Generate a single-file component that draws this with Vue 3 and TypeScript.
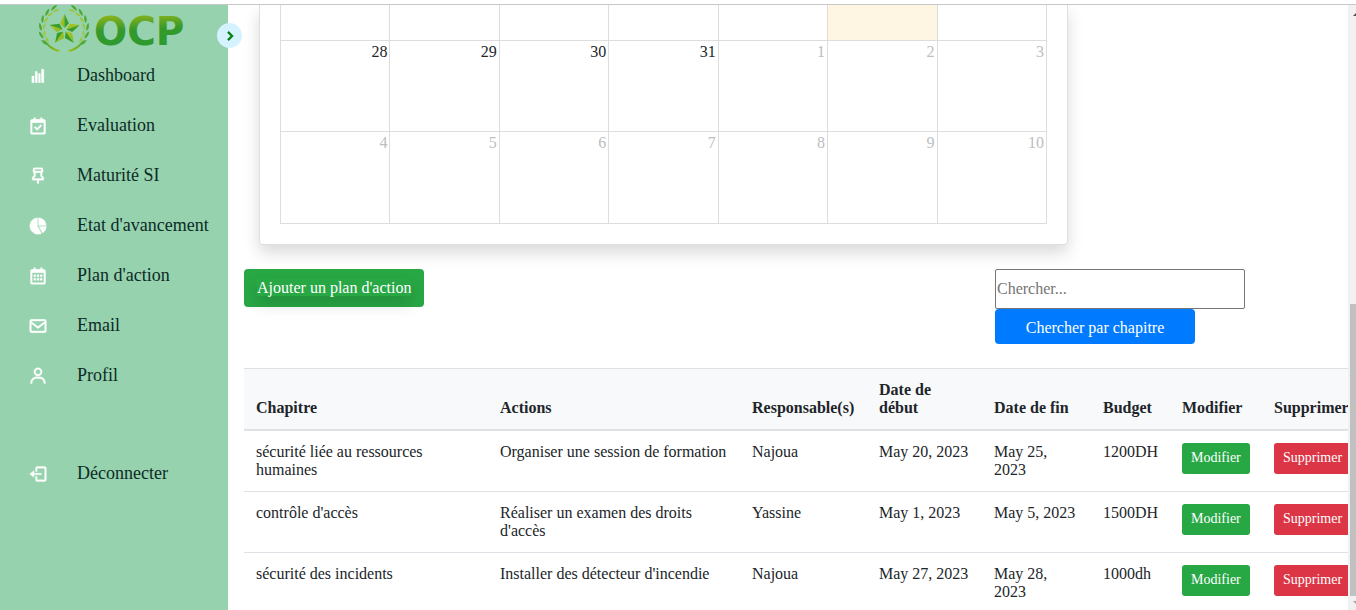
<script setup lang="ts">
import { ref } from 'vue'

interface NavItem { label: string; paths: string[] }
interface Day { n: string; muted?: boolean; today?: boolean }
interface Plan {
  chapitre: string
  action: string
  responsable: string
  debut: string
  fin: string
  budget: string
}

const calendarFrame =
  'M19 4h-2V2h-2v2H9V2H7v2H5c-1.103 0-2 .897-2 2v14c0 1.103.897 2 2 2h14c1.103 0 2-.897 2-2V6c0-1.103-.897-2-2-2zm.002 16H5V8h14l.002 12z'

const nav: NavItem[] = [
  { label: 'Dashboard', paths: ['M4.6 12h2.6v8H4.6zM8.6 6.5h2.6V20H8.6zM12.6 9h2.2v11h-2.2zM16.2 4H19v16h-2.8z'] },
  { label: 'Evaluation', paths: [calendarFrame, 'm11 17.414 5.707-5.707-1.414-1.414L11 14.586l-2.293-2.293-1.414 1.414z'] },
  { label: 'Maturité SI', paths: ['m12 22 1-2v-3h5a1 1 0 0 0 1-1v-1.586c0-.526-.214-1.042-.586-1.414L17 11.586V8a1 1 0 0 0 1-1V4c0-1.103-.897-2-2-2H8c-1.103 0-2 .897-2 2v3a1 1 0 0 0 1 1v3.586L5.586 13A2.01 2.01 0 0 0 5 14.414V16a1 1 0 0 0 1 1h5v3l1 2zM8 4h8v2H8V4zM7 15v-.586l1.707-1.707A.996.996 0 0 0 9 12V8h6v4c0 .266.105.52.293.707L17 14.414V15H7z'] },
  { label: "Etat d'avancement", paths: ['M11.4 2A10 10 0 1 0 16.2 21.1L11.4 12.3z', 'M12.7 2v9.3H22A10 10 0 0 0 12.7 2z', 'M22 12.7h-8.8l4.3 7.7A10 10 0 0 0 22 12.7z'] },
  { label: "Plan d'action", paths: [calendarFrame, 'M7 10.5h2.4v2.4H7zm0 4.3h2.4v2.4H7zm3.8-4.3h2.4v2.4h-2.4zm0 4.3h2.4v2.4h-2.4zm3.8-4.3H17v2.4h-2.4zm0 4.3H17v2.4h-2.4z'] },
  { label: 'Email', paths: ['M20 4H4c-1.103 0-2 .897-2 2v12c0 1.103.897 2 2 2h16c1.103 0 2-.897 2-2V6c0-1.103-.897-2-2-2zm0 2v.511l-8 6.223-8-6.222V6h16zM4 18V9.044l7.386 5.745a.994.994 0 0 0 1.228 0L20 9.044 20.002 18H4z'] },
  { label: 'Profil', paths: ['M12 2a5 5 0 1 0 5 5 5 5 0 0 0-5-5zm0 8a3 3 0 1 1 3-3 3 3 0 0 1-3 3zm9 11v-1a7 7 0 0 0-7-7h-4a7 7 0 0 0-7 7v1h2v-1a5 5 0 0 1 5-5h4a5 5 0 0 1 5 5v1z'] },
]
const logoutPaths = ['m2 12 5 4v-3h9v-2H7V8z', 'M20 3h-9a2 2 0 0 0-2 2v4h2V5h9v14h-9v-4H9v4a2 2 0 0 0 2 2h9a2 2 0 0 0 2-2V5a2 2 0 0 0-2-2z']

const weeks: Day[][] = [
  [{ n: '' }, { n: '' }, { n: '' }, { n: '' }, { n: '' }, { n: '', today: true }, { n: '' }],
  [{ n: '28' }, { n: '29' }, { n: '30' }, { n: '31' }, { n: '1', muted: true }, { n: '2', muted: true }, { n: '3', muted: true }],
  ['4', '5', '6', '7', '8', '9', '10'].map((n) => ({ n, muted: true })),
]

const headers = ['Chapitre', 'Actions', 'Responsable(s)', 'Date de début', 'Date de fin', 'Budget', 'Modifier', 'Supprimer']
const plans: Plan[] = [
  { chapitre: 'sécurité liée au ressources humaines', action: 'Organiser une session de formation', responsable: 'Najoua', debut: 'May 20, 2023', fin: 'May 25, 2023', budget: '1200DH' },
  { chapitre: "contrôle d'accès", action: "Réaliser un examen des droits d'accès", responsable: 'Yassine', debut: 'May 1, 2023', fin: 'May 5, 2023', budget: '1500DH' },
  { chapitre: 'sécurité des incidents', action: "Installer des détecteur d'incendie", responsable: 'Najoua', debut: 'May 27, 2023', fin: 'May 28, 2023', budget: '1000dh' },
]

const query = ref('')

// Wreath leaves, placed along the left arc of the emblem and mirrored for the right one
const leaves = Array.from({ length: 6 }, (_, i) => {
  const deg = 145 + i * 20
  const a = (deg * Math.PI) / 180
  return { x: 26 + 22 * Math.cos(a), y: 24 + 22 * Math.sin(a), deg }
})

// Five-pointed star made of separate arms, each split into a light and a dark facet
const point = (r: number, deg: number) => {
  const a = (deg * Math.PI) / 180
  return `${(26.5 + r * Math.cos(a)).toFixed(1)},${(25 + r * Math.sin(a)).toFixed(1)}`
}
const arms = [0, 1, 2, 3, 4].map((k) => {
  const d = -90 + k * 72
  return {
    light: `${point(2, d)} ${point(16, d)} ${point(8, d - 33)}`,
    dark: `${point(2, d)} ${point(16, d)} ${point(8, d + 33)}`,
  }
})
</script>

<template>
  <div class="window">
    <div class="shell">
      <aside class="sidebar">
        <svg class="logo" viewBox="0 0 154 48" role="img" aria-label="OCP">
          <defs>
            <linearGradient id="letters" x1="0" y1="0" x2="0.1" y2="1">
              <stop offset="0.15" stop-color="#8fb41c" />
              <stop offset="0.5" stop-color="#35992a" />
              <stop offset="1" stop-color="#2a9a30" />
            </linearGradient>
            <linearGradient id="facet" x1="0" y1="0" x2="1" y2="1">
              <stop offset="0" stop-color="#b4c61c" />
              <stop offset="1" stop-color="#84b824" />
            </linearGradient>
            <linearGradient id="stem" x1="0" y1="0" x2="1" y2="1">
              <stop offset="0" stop-color="#3c9d2c" />
              <stop offset="1" stop-color="#a5c020" />
            </linearGradient>
          </defs>
          <g v-for="side in 2" :key="side" :transform="side === 2 ? 'translate(52 0) scale(-1 1)' : undefined">
            <path d="M6 34Q12 43 22 45L20 47Q9 44 6 34z" fill="url(#stem)" />
            <g v-for="l in leaves" :key="l.deg" :transform="`translate(${l.x} ${l.y}) rotate(${l.deg + 90})`">
              <path d="M-4 0Q-2-4 4-3Q2 0-4 0z" fill="#4da83a" />
              <path d="M-3 1Q0 4 4 3Q2 0-3 1z" fill="#a0c43c" />
            </g>
          </g>
          <g v-for="arm in arms" :key="arm.light">
            <polygon :points="arm.light" fill="url(#facet)" />
            <polygon :points="arm.dark" fill="#3a9d28" />
          </g>
          <text x="56" y="40" class="wordmark" fill="url(#letters)">OCP</text>
        </svg>

        <button class="toggle" type="button" aria-label="Menu">
          <svg viewBox="0 0 24 24"><path d="m8.5 5 7 7-7 7" /></svg>
        </button>

        <nav class="nav">
          <a v-for="item in nav" :key="item.label" href="#" class="nav-link">
            <svg viewBox="0 0 24 24"><path v-for="p in item.paths" :key="p" :d="p" /></svg>
            <span>{{ item.label }}</span>
          </a>
          <a href="#" class="nav-link logout">
            <svg viewBox="0 0 24 24"><path v-for="p in logoutPaths" :key="p" :d="p" /></svg>
            <span>Déconnecter</span>
          </a>
        </nav>
      </aside>

      <main class="content">
        <section class="card">
          <table class="calendar">
            <tbody>
              <tr v-for="(week, w) in weeks" :key="w" :class="{ partial: w === 0 }">
                <td v-for="(day, d) in week" :key="d" :class="{ muted: day.muted, today: day.today }">{{ day.n }}</td>
              </tr>
            </tbody>
          </table>
        </section>

        <div class="toolbar">
          <button type="button" class="btn add"><span>Ajouter un plan d'action</span></button>
          <form class="search" @submit.prevent>
            <input v-model="query" type="text" placeholder="Chercher..." aria-label="Chercher" />
            <button type="submit" class="btn find">Chercher par chapitre</button>
          </form>
        </div>

        <table class="plans">
          <colgroup>
            <col />
            <col class="c-action" />
            <col class="c-resp" />
            <col class="c-start" />
            <col class="c-end" />
            <col class="c-budget" />
            <col class="c-edit" />
            <col class="c-delete" />
          </colgroup>
          <thead>
            <tr><th v-for="h in headers" :key="h" scope="col">{{ h }}</th></tr>
          </thead>
          <tbody>
            <tr v-for="p in plans" :key="p.chapitre">
              <td>{{ p.chapitre }}</td>
              <td>{{ p.action }}</td>
              <td>{{ p.responsable }}</td>
              <td>{{ p.debut }}</td>
              <td>{{ p.fin }}</td>
              <td>{{ p.budget }}</td>
              <td><button type="button" class="btn small edit">Modifier</button></td>
              <td><button type="button" class="btn small delete">Supprimer</button></td>
            </tr>
          </tbody>
        </table>
      </main>

      <div class="scrollbar" aria-hidden="true">
        <svg class="arrow" viewBox="0 0 8 17"><path d="M5 11 9 7v4z" fill="#505050" /></svg>
        <div class="before"></div>
        <div class="thumb"></div>
        <svg class="arrow end" viewBox="0 0 8 14"><path d="M5 5h4v4z" fill="#a3a3a3" /></svg>
      </div>
    </div>
  </div>
</template>

<style>
body {
  margin: 0;
  overflow: hidden;
}
</style>

<style scoped>
* {
  box-sizing: border-box;
}
.window {
  height: 100vh;
  padding-top: 4px;
  background: #fff;
  color: #212529;
  font-family: 'Liberation Serif', 'Times New Roman', serif;
  font-size: 16px;
  line-height: 18px;
}
.shell {
  display: flex;
  height: 100%;
  border-top: 1px solid #c8c8c8;
  overflow: hidden;
}
button,
input {
  font: inherit;
}

.sidebar {
  position: relative;
  z-index: 1;
  flex: 0 0 228px;
  background: #96d2ae;
}
.logo {
  display: block;
  width: 154px;
  height: 48px;
  margin-left: 38px;
}
.wordmark {
  font: bold 39px 'DejaVu Sans', sans-serif;
}
.toggle {
  position: absolute;
  top: 18px;
  right: -14px;
  display: flex;
  align-items: center;
  justify-content: center;
  width: 25px;
  height: 25px;
  padding: 0;
  border: 0;
  border-radius: 50%;
  background: #d5f2ff;
}
.toggle svg {
  width: 14px;
  height: 14px;
  fill: none;
  stroke: #078012;
  stroke-width: 4;
}
.nav {
  display: flex;
  flex-direction: column;
  gap: 10px;
  margin-top: 2px;
}
.nav-link {
  display: flex;
  align-items: center;
  height: 40px;
  color: #0d2b25;
  font-size: 18px;
  text-decoration: none;
}
.nav-link svg {
  flex: 0 0 20px;
  height: 20px;
  margin: 2px 29px 0 28px;
  fill: #fff;
  stroke: #fff;
  stroke-width: 0.4;
}
.logout {
  margin-top: 48px;
}

.content {
  flex: 1;
  min-width: 0;
  padding-left: 16px;
  overflow: hidden;
}
.card {
  max-width: 809px;
  margin: 0 16px 24px 15px;
  padding: 0 20px 20px;
  border: 1px solid #dfdfdf;
  border-top: 0;
  border-radius: 0 0 4px 4px;
  box-shadow: 0 8px 16px rgba(0, 0, 0, 0.15);
}
.calendar {
  width: 100%;
  table-layout: fixed;
  border-collapse: collapse;
}
.calendar td {
  height: 91px;
  padding: 2px;
  border: 1px solid #ddd;
  text-align: right;
  vertical-align: top;
}
.calendar .partial td {
  height: 35px;
  border-top: 0;
}
.calendar tr:last-child td {
  height: 92px;
}
.calendar .muted {
  color: #bcbec0;
}
.calendar .today {
  background: #fef6e3;
}

.toolbar {
  display: flex;
  align-items: flex-start;
  justify-content: space-between;
  margin: 0 103px 24px 0;
}
.btn {
  border: 0;
  border-radius: 4px;
  color: #fff;
  cursor: pointer;
}
.add {
  height: 38px;
  padding: 0 13px;
  background: #28a745;
}
.add span {
  box-shadow: 0 8px 16px rgba(0, 0, 0, 0.15);
}
.search {
  display: flex;
  flex-direction: column;
  align-items: flex-start;
  width: 250px;
}
.search input {
  width: 100%;
  height: 40px;
  padding: 1px;
  border: 1px solid #767676;
  border-radius: 2px;
  outline: 0;
}
.search input::placeholder {
  color: #757575;
}
.find {
  width: 200px;
  height: 35px;
  padding: 3px 0 0;
  background: #007bff;
}

.plans {
  width: calc(100% + 16px);
  table-layout: fixed;
  border-spacing: 0;
}
.c-action { width: 252px; }
.c-resp { width: 127px; }
.c-start { width: 115px; }
.c-end { width: 109px; }
.c-budget { width: 79px; }
.c-edit { width: 92px; }
.c-delete { width: 102px; }
.plans th,
.plans td {
  padding: 12px;
  border-top: 1px solid #dee2e6;
  text-align: left;
  vertical-align: top;
}
.plans th {
  border-bottom: 2px solid #dee2e6;
  background: #f8f9fb;
  vertical-align: bottom;
}
.plans tbody tr:first-child td {
  border-top: 0;
}
.small {
  display: block;
  height: 31px;
  padding: 0 9px;
  border-radius: 3px;
  font-size: 14px;
}
.edit {
  background: #28a745;
}
.delete {
  background: #dc3545;
}

.scrollbar {
  display: flex;
  flex: 0 0 8px;
  flex-direction: column;
  background: #f1f1f1;
}
.arrow {
  flex: 0 0 17px;
  width: 8px;
}
.arrow.end {
  flex-basis: 14px;
}
.before {
  flex: 282;
}
.thumb {
  flex: 292;
  margin-left: 2px;
  background: #c1c1c1;
}
</style>
